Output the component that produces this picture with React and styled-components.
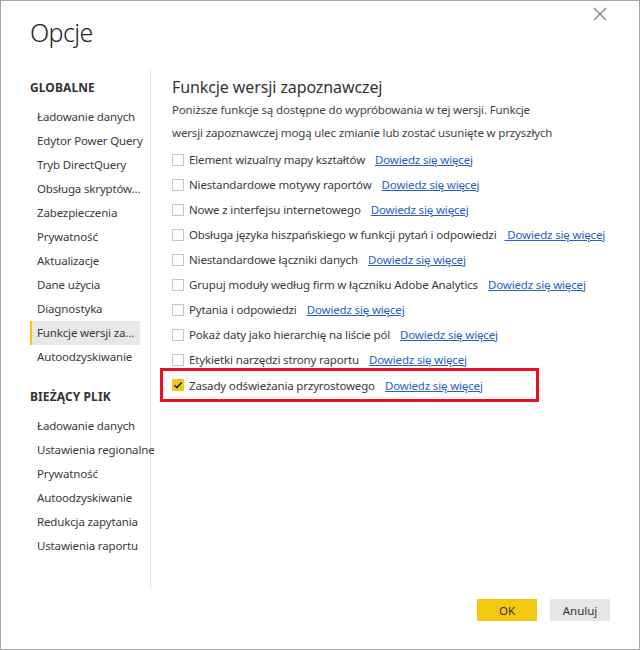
import styled, { createGlobalStyle } from "styled-components";

const GlobalStyle = createGlobalStyle`
	body {
		margin: 0;
		background: #ffffff;
		font-family: "Noto Sans", "Open Sans", sans-serif;
	}
`;

const Dialog = styled.div`
	position: relative;
	box-sizing: border-box;
	width: 640px;
	height: 650px;
	border: 1px solid #a6a6a6;
	display: flex;
	flex-direction: column;
	background: #fff;
`;

const Header = styled.div`
	display: flex;
	justify-content: space-between;
	align-items: flex-start;
	height: 69px;
	padding-left: 29px;
`;

const Title = styled.h1`
	margin: 14px 0 0;
	font-size: 25px;
	font-weight: 300;
	color: #252525;
	letter-spacing: -0.6px;
`;

const CloseButton = styled.button`
	width: 30px;
	height: 26px;
	margin: 0 24px 0 0;
	padding: 0;
	border: none;
	background: transparent;
	display: flex;
	align-items: center;
	justify-content: center;
`;

const Body = styled.div`
	display: flex;
	flex: 1;
	min-height: 0;
`;

const Sidebar = styled.nav`
	width: 120px;
	margin-left: 29px;
	height: 512px;
	border-right: 1px solid #e6e6e6;
	padding-top: 6px;
	white-space: nowrap;
`;

const SectionTitle = styled.div`
	height: 24px;
	line-height: 24px;
	margin-top: ${(p) => (p.$first ? "0" : "16px")};
	margin-bottom: 5px;
	font-size: 12px;
	font-weight: 700;
	color: #333;
	letter-spacing: 0.1px;
`;

const NavItem = styled.div`
	box-sizing: border-box;
	width: 110px;
	height: 24px;
	line-height: 24px;
	padding-left: ${(p) => (p.$active ? "5px" : "7px")};
	border-left: ${(p) => (p.$active ? "2px solid #f2c811" : "none")};
	background: ${(p) => (p.$active ? "#e8e8e8" : "transparent")};
	font-size: 11.5px;
	letter-spacing: -0.15px;
	color: #3b3b3b;
	overflow: visible;
`;

const Content = styled.main`
	flex: 1;
	padding-left: 21px;
	padding-top: 7px;
`;

const Heading = styled.h2`
	margin: 0;
	height: 21px;
	line-height: 21px;
	font-size: 16px;
	font-weight: 400;
	letter-spacing: -0.1px;
	color: #333;
`;

const Description = styled.p`
	margin: 0 0 3px;
	font-size: 11.5px;
	letter-spacing: -0.15px;
	line-height: 23px;
	white-space: nowrap;
	color: #444;
`;

const Row = styled.div`
	display: flex;
	align-items: center;
	height: 25px;
	font-size: 11.5px;
	letter-spacing: -0.15px;
	color: #3b3b3b;
	white-space: nowrap;
	${(p) =>
		p.$highlighted &&
		`
		box-sizing: border-box;
		width: 379px;
		height: 34px;
		margin: -4px 0 0 -12px;
		padding-left: 9px;
		border: 3px solid #e81123;
	`}
`;

const Box = styled.span`
	box-sizing: border-box;
	width: 12px;
	height: 12px;
	margin-right: 5px;
	border: 1px solid ${(p) => (p.$checked ? "#f2c811" : "#c4c4c4")};
	background: ${(p) => (p.$checked ? "#f2c811" : "#fff")};
	display: flex;
	align-items: center;
	justify-content: center;
	flex-shrink: 0;
`;

const Link = styled.a`
	margin-left: ${(p) => p.$gap || 10}px;
	color: #2462c2;
	text-decoration: underline;
	cursor: pointer;
`;

const Footer = styled.div`
	display: flex;
	justify-content: flex-end;
	gap: 13px;
	padding: 0 29px 28px 0;
`;

const Button = styled.button`
	width: 60px;
	height: 22px;
	border: none;
	font-family: inherit;
	font-size: 11.5px;
	color: #333;
	background: ${(p) => (p.$primary ? "#f2c811" : "#e6e6e6")};
`;

const globalItems = [
	"Ładowanie danych",
	"Edytor Power Query",
	"Tryb DirectQuery",
	"Obsługa skryptów…",
	"Zabezpieczenia",
	"Prywatność",
	"Aktualizacje",
	"Dane użycia",
	"Diagnostyka",
	"Funkcje wersji za…",
	"Autoodzyskiwanie",
];

const fileItems = [
	"Ładowanie danych",
	"Ustawienia regionalne",
	"Prywatność",
	"Autoodzyskiwanie",
	"Redukcja zapytania",
	"Ustawienia raportu",
];

const features = [
	{ label: "Element wizualny mapy kształtów" },
	{ label: "Niestandardowe motywy raportów" },
	{ label: "Nowe z interfejsu internetowego" },
	{ label: "Obsługa języka hiszpańskiego w funkcji pytań i odpowiedzi", gap: 8, pre: true },
	{ label: "Niestandardowe łączniki danych" },
	{ label: "Grupuj moduły według firm w łączniku Adobe Analytics" },
	{ label: "Pytania i odpowiedzi" },
	{ label: "Pokaż daty jako hierarchię na liście pól" },
	{ label: "Etykietki narzędzi strony raportu" },
	{ label: "Zasady odświeżania przyrostowego", checked: true },
];

const CloseIcon = () => (
	<svg width="14" height="14" viewBox="0 0 14 14">
		<path d="M1 1L13 13M13 1L1 13" stroke="#7a7a7a" strokeWidth="1.1" fill="none" />
	</svg>
);

const Check = () => (
	<svg width="10" height="10" viewBox="0 0 10 10">
		<path d="M1.5 5.2L4 7.6L8.6 2.4" stroke="#1a1a1a" strokeWidth="1.5" fill="none" />
	</svg>
);

const App = () => {
	return (
		<>
			<GlobalStyle />
			<Dialog>
				<Header>
					<Title>Opcje</Title>
					<CloseButton aria-label="Zamknij">
						<CloseIcon />
					</CloseButton>
				</Header>
				<Body>
					<Sidebar>
						<SectionTitle $first>GLOBALNE</SectionTitle>
						{globalItems.map((item) => (
							<NavItem key={item} $active={item === "Funkcje wersji za…"}>
								{item}
							</NavItem>
						))}
						<SectionTitle>BIEŻĄCY PLIK</SectionTitle>
						{fileItems.map((item) => (
							<NavItem key={item}>{item}</NavItem>
						))}
					</Sidebar>
					<Content>
						<Heading>Funkcje wersji zapoznawczej</Heading>
						<Description>
							Poniższe funkcje są dostępne do wypróbowania w tej wersji. Funkcje
							<br />
							wersji zapoznawczej mogą ulec zmianie lub zostać usunięte w przyszłych
						</Description>
						{features.map((f) => (
							<Row key={f.label} $highlighted={f.checked}>
								<Box $checked={f.checked}>{f.checked && <Check />}</Box>
								{f.label}
								<Link $gap={f.gap}>{f.pre ? "\u00a0Dowiedz się więcej" : "Dowiedz się więcej"}</Link>
							</Row>
						))}
					</Content>
				</Body>
				<Footer>
					<Button $primary>OK</Button>
					<Button>Anuluj</Button>
				</Footer>
			</Dialog>
		</>
	);
};

export default App;
